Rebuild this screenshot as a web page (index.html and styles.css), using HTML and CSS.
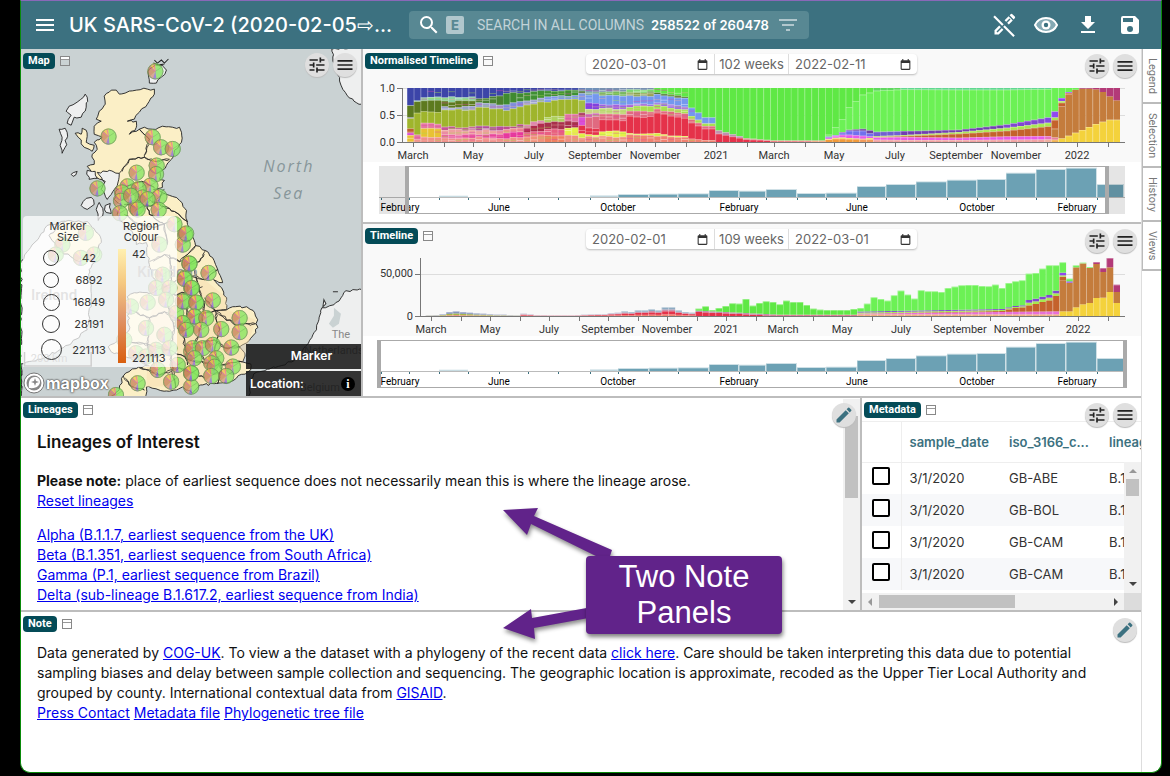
FILE: index.html
```html
<!DOCTYPE html>
<html lang="en">
<head>
<meta charset="utf-8">
<title>UK SARS-CoV-2</title>
<link rel="stylesheet" href="styles.css">
</head>
<body>
<svg class="defs" aria-hidden="true">
  <symbol id="i-tune" viewBox="0 0 24 24"><path d="M3 17v2h6v-2H3zM3 5v2h10V5H3zm10 16v-2h8v-2h-8v-2h-2v6h2zM7 9v2H3v2h4v2h2V9H7zm14 4v-2H11v2h10zm-6-4h2V7h4V5h-4V3h-2v6z"/></symbol>
  <symbol id="i-menu" viewBox="0 0 24 24"><path d="M3 18h18v-2H3v2zm0-5h18v-2H3v2zm0-7v2h18V6H3z"/></symbol>
  <symbol id="i-pencil" viewBox="0 0 24 24"><path d="M3 17.25V21h3.75L17.81 9.94l-3.75-3.75L3 17.25zM20.71 7.04a1 1 0 0 0 0-1.41l-2.34-2.34a1 1 0 0 0-1.41 0l-1.83 1.83 3.75 3.75 1.83-1.83z"/></symbol>
  <symbol id="i-cal" viewBox="0 0 24 24"><path d="M19 4h-1V2h-2v2H8V2H6v2H5a2 2 0 0 0-2 2v14a2 2 0 0 0 2 2h14a2 2 0 0 0 2-2V6a2 2 0 0 0-2-2zm0 16H5V9h14v11z"/></symbol>
  <symbol id="i-search" viewBox="0 0 24 24"><path d="M15.5 14h-.79l-.28-.27A6.47 6.47 0 0 0 16 9.5 6.5 6.5 0 1 0 9.5 16c1.61 0 3.09-.59 4.23-1.57l.27.28v.79l5 4.99L20.49 19l-4.99-5zm-6 0a4.5 4.5 0 1 1 0-9 4.5 4.5 0 0 1 0 9z"/></symbol>
</svg>
<div class="app">
  <header class="bar">
    <button class="plain" aria-label="Menu"><svg class="i24"><use href="#i-menu"/></svg></button>
    <h1>UK SARS-CoV-2 (2020-02-05⇨...</h1>
    <div class="search">
      <svg class="i24"><use href="#i-search"/></svg>
      <span class="key">E</span>
      <input type="text" aria-label="Search" placeholder="SEARCH IN ALL COLUMNS">
      <strong>258522 of 260478</strong>
      <svg class="filter" viewBox="0 0 18 12"><path d="M7 12h4v-2H7v2zM0 0v2h18V0H0zm3 7h12V5H3v2z"/></svg>
    </div>
    <nav class="tools">
      <button class="plain" aria-label="Stop editing"><svg class="i24" viewBox="0 0 24 24"><path d="M2.5 21.5v-4.2L7.2 12.6l4.2 4.2-4.700 4.700zM12.600 7.200l4-4 4.200 4.200-4 4zM17.600 2.200l1.300-1.200q.8-.5 1.500.2l2.400 2.400q.7.8.1 1.500l-1.200 1.300zM1.300 4l1.500-1.500 20 20-1.500 1.500z"/><path d="M5 19l13-13" stroke="#3c7180" stroke-width="1.500"/></svg></button>
      <button class="plain" aria-label="View"><svg class="i24" viewBox="0 0 24 24"><path d="M12 5C7 5 2.730 8.110 1 12c1.730 3.890 6 7 11 7s9.270-3.110 11-7c-1.730-3.890-6-7-11-7z" fill="#84a9b4" stroke="#fff" stroke-width="2"/><circle cx="12" cy="12" r="4.500"/><circle cx="12" cy="12" r="2.200" fill="#3c7180"/></svg></button>
      <button class="plain" aria-label="Download"><svg class="i24" viewBox="0 0 24 24"><path d="M19 9h-4V3H9v6H5l7 7 7-7zM5 18v2h14v-2H5z"/></svg></button>
      <button class="plain" aria-label="Save"><svg class="i24" viewBox="0 0 24 24"><path d="M17 3H5a2 2 0 0 0-2 2v14a2 2 0 0 0 2 2h14a2 2 0 0 0 2-2V7l-4-4zm-5 16a3 3 0 1 1 0-6 3 3 0 0 1 0 6zm3-10H5V5h10v4z"/></svg></button>
    </nav>
  </header>
  <div class="body">
    <main>
      <div class="row top">
        <section class="panel map">
          <svg id="map" viewBox="22 50 339 346" preserveAspectRatio="xMidYMid slice" role="img" aria-label="Map of UK"></svg>
          <div class="head over"><h2>Map</h2><i class="win"></i><span class="acts"><button class="round" aria-label="Settings"><svg><use href="#i-tune"/></svg></button><button class="round" aria-label="Map menu"><svg><use href="#i-menu"/></svg></button></span></div>
          <div class="legend">
            <div class="sizes">
              <h3>Marker Size</h3>
              <ul>
                <li><i class="c16"></i><span>42</span></li>
                <li><i class="c16"></i><span>6892</span></li>
                <li><i class="c17"></i><span>16849</span></li>
                <li><i class="c18"></i><span>28191</span></li>
                <li><i class="c21"></i><span>221113</span></li>
              </ul>
            </div>
            <div class="region">
              <h3>Region Colour</h3>
              <div class="scale"><i></i><div><span>42</span><span>221113</span></div></div>
            </div>
          </div>
          <div class="mapbox"><svg viewBox="0 0 22 22"><circle cx="11" cy="11" r="10" fill="#fff" stroke="#777" stroke-width="1"/><circle cx="11" cy="11" r="7.500" fill="#888"/><path d="M6 16c-1-7 1-11 6-11 3 0 5 2 5 5s-3 7-11 6z" fill="#fff"/><path d="M12 6l1 3 3 1-3 1-1 3-1-3-3-1 3-1z" fill="#888"/></svg><b>mapbox</b></div>
          <div class="tip"><p class="tt">Marker</p><p class="loc">Location:<span class="info">i</span></p></div>
        </section>
        <div class="stack">
          <section class="panel time">
            <div class="head"><h2>Normalised Timeline</h2><i class="win"></i>
              <div class="dates"><input type="text" aria-label="Start date" value="2020-03-01"><svg><use href="#i-cal"/></svg><span>102 weeks</span><input type="text" aria-label="End date" value="2022-02-11"><svg><use href="#i-cal"/></svg></div>
              <span class="acts"><button class="round" aria-label="Settings"><svg><use href="#i-tune"/></svg></button><button class="round" aria-label="Menu"><svg><use href="#i-menu"/></svg></button></span></div>
            <svg id="c1" viewBox="363 84 778 78" role="img" aria-label="Normalised timeline"></svg>
            <svg id="b1" class="brush" viewBox="363 162 778 60" role="img" aria-label="Range"></svg>
          </section>
          <section class="panel time">
            <div class="head"><h2>Timeline</h2><i class="win"></i>
              <div class="dates"><input type="text" aria-label="Start date" value="2020-02-01"><svg><use href="#i-cal"/></svg><span>109 weeks</span><input type="text" aria-label="End date" value="2022-03-01"><svg><use href="#i-cal"/></svg></div>
              <span class="acts"><button class="round" aria-label="Settings"><svg><use href="#i-tune"/></svg></button><button class="round" aria-label="Menu"><svg><use href="#i-menu"/></svg></button></span></div>
            <svg id="c2" viewBox="363 258 778 78" role="img" aria-label="Timeline"></svg>
            <svg id="b2" class="brush" viewBox="363 336 778 60" role="img" aria-label="Range"></svg>
          </section>
        </div>
      </div>
      <div class="row mid">
        <section class="panel lineages">
          <div class="head"><h2>Lineages</h2><i class="win"></i><span class="acts"><button class="round edit" aria-label="Edit"><svg><use href="#i-pencil"/></svg></button></span></div>
          <article class="note">
            <h3>Lineages of Interest</h3>
            <p><b>Please note:</b> place of earliest sequence does not necessarily mean this is where the lineage arose.<br><a href="#">Reset lineages</a></p>
            <p><a href="#">Alpha (B.1.1.7, earliest sequence from the UK)</a><br><a href="#">Beta (B.1.351, earliest sequence from South Africa)</a><br><a href="#">Gamma (P.1, earliest sequence from Brazil)</a><br><a href="#">Delta (sub-lineage B.1.617.2, earliest sequence from India)</a></p>
          </article>
          <div class="vs"><i></i><svg viewBox="0 0 8 4"><path d="M0 0h8L4 4z"/></svg></div>
        </section>
        <section class="panel meta">
          <div class="head"><h2>Metadata</h2><i class="win"></i><span class="acts"><button class="round" aria-label="Settings"><svg><use href="#i-tune"/></svg></button><button class="round" aria-label="Menu"><svg><use href="#i-menu"/></svg></button></span></div>
          <div class="grid">
            <table>
              <thead><tr><th class="ck"></th><th>sample_date</th><th>iso_3166_c...</th><th>lineage</th></tr></thead>
              <tbody>
                <tr><td class="ck"><input type="checkbox" aria-label="Select row 1"></td><td>3/1/2020</td><td>GB-ABE</td><td>B.1</td></tr>
                <tr><td class="ck"><input type="checkbox" aria-label="Select row 2"></td><td>3/1/2020</td><td>GB-BOL</td><td>B.1</td></tr>
                <tr><td class="ck"><input type="checkbox" aria-label="Select row 3"></td><td>3/1/2020</td><td>GB-CAM</td><td>B.1</td></tr>
                <tr><td class="ck"><input type="checkbox" aria-label="Select row 4"></td><td>3/1/2020</td><td>GB-CAM</td><td>B.1</td></tr>
              </tbody>
            </table>
            <div class="tv"><svg class="dim" viewBox="0 0 8 4"><path d="M0 4h8L4 0z"/></svg><i></i><svg viewBox="0 0 8 4"><path d="M0 0h8L4 4z"/></svg></div>
          </div>
          <div class="th"><svg class="dim" viewBox="0 0 4 8"><path d="M4 0v8L0 4z"/></svg><i></i><svg viewBox="0 0 4 8"><path d="M0 0v8l4-4z"/></svg><b></b></div>
        </section>
      </div>
      <section class="panel foot">
        <div class="head"><h2>Note</h2><i class="win"></i><span class="acts"><button class="round edit" aria-label="Edit"><svg><use href="#i-pencil"/></svg></button></span></div>
        <article class="note"><p>Data generated by <a href="#">COG-UK</a>. To view a the dataset with a phylogeny of the recent data <a href="#">click here</a>. Care should be taken interpreting this data due to potential<br>sampling biases and delay between sample collection and sequencing. The geographic location is approximate, recoded as the Upper Tier Local Authority and<br>grouped by county. International contextual data from <a href="#">GISAID</a>.<br><a href="#">Press Contact</a> <a href="#">Metadata file</a> <a href="#">Phylogenetic tree file</a></p></article>
      </section>
    </main>
    <nav class="tabs"><button>Legend</button><button>Selection</button><button>History</button><button>Views</button></nav>
  </div>
</div>
<aside class="callout">
  <svg viewBox="0 0 290 140" aria-hidden="true"><path d="M3 8L38 6 34 14 112 48 108 60 31 22 27 33z"/><path d="M3 126L31 107 32 116 92 105 94 115 34 126 35 137z"/></svg>
  <p>Two Note Panels</p>
</aside>
<script src="app.js"></script>
</body>
</html>
```

FILE: styles.css
```css
* { box-sizing: border-box; }
body { margin: 0; background: #000; font-family: Inter, "Liberation Sans", sans-serif; color: #111; position: relative; }
h1, h2, h3, p, ul { margin: 0; padding: 0; }
button, input { font: inherit; margin: 0; }
svg { display: block; }
.defs { position: absolute; width: 0; height: 0; }
.app { margin: 0 8px 0 20px; height: calc(100vh - 3px); min-height: 773px; display: flex; flex-direction: column; background: #fff; border: 1px solid #0a8a0a; border-top-color: #8a68b8; border-radius: 0 0 10px 10px; overflow: hidden; }
.bar { height: 48px; background: #3c7180; display: flex; align-items: center; padding: 0 19px 0 12px; }
.plain { border: 0; background: none; padding: 0; }
.i24 { width: 24px; height: 24px; fill: #fff; }
h1 { color: #fff; font-size: 20px; font-weight: 500; width: 340px; margin-left: 12px; white-space: nowrap; }
.search { width: 400px; height: 28px; background: #588893; border-radius: 4px; display: flex; align-items: center; padding: 0 12px 0 8px; }
.key { width: 18px; height: 18px; margin: 0 13px 0 5px; border-radius: 2px; background: #b1c7cd; color: #588893; font-size: 13px; font-weight: 800; line-height: 18px; text-align: center; }
.search input { width: 174px; flex: none; border: 0; padding: 0; background: none; color: #fff; font-family: Roboto, sans-serif; font-size: 14px; }
.search input::placeholder { color: #c2d3d8; opacity: 1; }
.search strong { color: #fff; font-size: 13px; font-weight: 600; white-space: nowrap; }
.filter { width: 18px; height: 12px; fill: #b1c7cd; margin-left: auto; }
.tools { margin-left: auto; display: flex; gap: 18px; }
.body { flex: 1; display: flex; min-height: 0; }
main { flex: 1; min-width: 0; display: flex; flex-direction: column; border-right: 1px solid #ddd; }
.row { display: flex; border-bottom: 2px solid #bdbdbd; }
.panel { position: relative; }
.head { display: flex; align-items: center; height: 24px; padding: 0 4px 0 2px; }
.head h2 { background: #044b57; color: #fff; border-radius: 4px; font-family: Roboto, sans-serif; font-size: 11px; font-weight: 700; line-height: 16px; padding: 0 5px; white-space: nowrap; }
.win { width: 10px; height: 10px; border: 1px solid #888; box-shadow: inset 0 2px #fff, inset 0 3px #999; margin-left: 5px; }
.acts { margin-left: auto; display: flex; gap: 4px; padding-top: 8px; }
.round { width: 24px; height: 24px; border-radius: 50%; border: 0; padding: 2px; background: #dfdfdf; box-shadow: 0 1px 1px #bbb; position: relative; z-index: 2; }
.round svg { width: 20px; height: 20px; fill: #222; }
.edit svg { fill: #3c7180; }
.map { flex: 0 0 342px; height: 347px; border-right: 2px solid #bdbdbd; overflow: hidden; }
#map { width: 100%; height: 100%; }
.over { position: absolute; top: 0; left: 0; right: 0; }
.legend { position: absolute; left: 2px; top: 167px; width: 154px; height: 151px; border-radius: 4px 4px 0 0; background: rgba(255,255,255,.72); display: flex; color: #333; font-size: 11px; }
.legend h3 { font-size: 11px; font-weight: 400; line-height: 11px; text-align: center; }
.sizes { width: 90px; padding: 5px 4px 0 10px; }
.region h3 { width: 50px; }
.sizes h3 { width: 50px; margin-left: 10px; }
.sizes li { display: flex; align-items: center; height: 22px; }
.sizes li:last-child { height: 29px; }
.sizes ul { padding-top: 4px; }
.sizes li i { border: 1px solid #333; border-radius: 50%; margin: 0 auto; }
.c16 { width: 16px; height: 16px; }
.c17 { width: 17px; height: 17px; }
.c18 { width: 18px; height: 18px; }
.c21 { width: 21px; height: 21px; }
.sizes li span { width: 40px; text-align: center; }
.region { width: 60px; padding-top: 5px; }
.region h3 { margin-left: 3px; }
.scale { display: flex; margin-top: 6px; height: 114px; gap: 6px; padding-left: 5px; }
.scale i { width: 8px; background: linear-gradient(#fff0b0, #f5c880 30%, #e0956a 60%, #d95f0e); }
.scale div { display: flex; flex-direction: column; justify-content: space-between; line-height: 10px; }
.mapbox { position: absolute; left: 2px; bottom: 2px; display: flex; align-items: center; gap: 1px; color: #fff; font-size: 16px; line-height: 20px; text-shadow: 0 0 2px #555, 0 0 2px #555, 0 0 1px #555; }
.mapbox svg { width: 22px; height: 22px; }
.tip { position: absolute; right: 0; bottom: 0; width: 115px; color: #fff; font-size: 12px; font-weight: 600; }
.tip p { height: 25px; line-height: 24px; background: rgba(20,20,20,.86); padding: 0 6px 0 4px; }
.tip .tt { margin-bottom: 2px; text-align: center; padding-left: 22px; }
.loc { display: flex; justify-content: space-between; align-items: center; }
.info { width: 14px; height: 14px; border-radius: 50%; background: #000; font: 700 12px/14px "Liberation Serif", serif; text-align: center; }
.stack { flex: 1; min-width: 0; display: flex; flex-direction: column; }
.time { background: #f9f9f9; }
.time:first-child { border-bottom: 2px solid #bdbdbd; }
.time .head { height: 35px; align-items: flex-start; padding-top: 4px; }
.time + .time .head { height: 34px; }
.time .win { margin-top: 3px; }
.time .acts { margin-left: auto; padding-top: 1px; }
.time > svg { width: 100%; overflow: visible; }
.brush { background: #fff; }
.dates { position: absolute; left: 223px; top: 5px; display: flex; align-items: center; height: 20px; background: #fff; border-radius: 4px; box-shadow: 0 1px 2px #bbb; color: #666; font-size: 13px; }
.dates input { width: 100px; border: 0; padding: 0 0 0 6px; background: none; color: #666; font-size: 13px; }
.dates svg { width: 13px; height: 13px; fill: #333; margin: 0 5px 0 10px; }
.dates span { border: solid #ddd; border-width: 0 1px; width: 75px; line-height: 20px; text-align: center; white-space: nowrap; }
.mid { height: 214px; }
.lineages { flex: 1; min-width: 0; overflow: hidden; }
.note { padding: 0 16px; font-size: 14px; line-height: 20px; }
.note h3 { font-size: 17px; line-height: 20px; padding: 10px 0 19px; font-weight: 600; }
.note p { margin-bottom: 14px; }
a { color: #0000ee; }
.lineages .acts { position: absolute; right: 4px; top: 5px; padding: 0; }
.vs { position: absolute; right: 0; top: 1px; bottom: 0; width: 17px; background: #f1f1f1; padding: 17px 2px 6px; display: flex; flex-direction: column; align-items: center; justify-content: space-between; }
.vs i { width: 13px; height: 82px; background: #c1c1c1; }
.vs svg, .tv svg { width: 8px; height: 4px; fill: #444; }
.dim { opacity: .5; }
.meta { flex: 0 0 281px; min-width: 0; border-left: 2px solid #bdbdbd; display: flex; flex-direction: column; }
.meta .head { border-bottom: 1px solid #eee; flex: none; height: 24px; }
.meta .acts { padding-top: 10px; }
.grid { position: relative; overflow: hidden; flex: 1; }
table { border-collapse: collapse; table-layout: fixed; width: 339px; font-size: 13px; color: #333; }
th { height: 40px; width: 100px; padding: 0 8px; text-align: left; color: #3c7180; font-size: 13px; font-weight: 600; border-bottom: 1px solid #eee; }
td { height: 32px; padding: 0 8px; }
tbody tr:nth-child(even) { background: #f7f8fa; }
.ck { width: 39px; padding: 0 0 0 10px; border-right: 1px solid #eee; }
.ck input { appearance: none; display: block; width: 18px; height: 18px; border: 2px solid #000; border-radius: 2px; background: #fff; margin-bottom: 4px; }
.tv { position: absolute; right: 0; top: 40px; bottom: 0; width: 17px; background: #f1f1f1; display: flex; flex-direction: column; align-items: center; padding: 7px 0 7px; }
.tv i { width: 13px; height: 17px; background: #c1c1c1; margin: 6px 0 auto; }
.th { height: 17px; background: #f1f1f1; display: flex; align-items: center; padding-left: 6px; }
.th svg { width: 4px; height: 8px; fill: #444; }
.th i { width: 136px; height: 13px; background: #c1c1c1; margin: 0 auto 0 7px; }
.th b { width: 17px; height: 17px; background: #dcdcdc; margin-left: 6px; }
.foot { flex: 1; }
.foot .note { padding-top: 7px; }
.foot .acts { padding-top: 12px; }
.tabs { width: 19px; display: flex; flex-direction: column; align-items: stretch; }
.tabs button { writing-mode: vertical-rl; border: 2px solid #bbb; border-width: 0 0 2px 1px; background: #fff; color: #777; font-family: Roboto, sans-serif; font-size: 11px; padding: 9px 2px 8px; text-align: left; line-height: 14px; }
.callout { position: absolute; left: 500px; top: 502px; width: 290px; height: 140px; }
.callout svg { width: 290px; height: 140px; fill: #61238a; filter: drop-shadow(1px 3px 2px rgba(0,0,0,.45)); }
.callout p { position: absolute; left: 86px; top: 54px; width: 196px; height: 78px; background: #61238a; border-radius: 4px; box-shadow: 1px 3px 4px rgba(0,0,0,.5); color: #fff; font: 31px/36px "Liberation Sans", sans-serif; text-align: center; padding: 3px 28px; }
.ax { font-family: Roboto, sans-serif; font-size: 11px; fill: #333; text-anchor: middle; }
.ax.end { text-anchor: end; }
.bx { font-family: Roboto, sans-serif; font-size: 10px; fill: #000; text-anchor: middle; }
.sea { font-family: "Open Sans", sans-serif; font-style: italic; font-size: 16px; fill: #87969a; letter-spacing: 2px; text-anchor: middle; }
.place { font-family: Roboto, sans-serif; fill: #888; font-size: 11px; text-anchor: middle; }
.big { font-size: 15px; font-weight: 500; fill: #999; }
```

FILE: app.js
```js
const R = (x, y, w, h, f, o) => `<rect x="${x.toFixed(2)}" y="${y.toFixed(2)}" width="${w.toFixed(2)}" height="${Math.max(0, h).toFixed(2)}" fill="${f}"${o ? ` opacity="${o}"` : ''}/>`;
const L = (x1, y1, x2, y2, c, w = 1) => `<path d="M${x1} ${y1}L${x2} ${y2}" stroke="${c}" stroke-width="${w}"/>`;
const T = (x, y, s, c) => `<text x="${x}" y="${y}" class="${c}">${s}</text>`;
let seed = 7;
const rnd = () => (seed = (seed * 16807) % 2147483647) / 2147483647;

/* Share of each lineage by week: week -> [colour, cumulative top out of 162] */
const frames = [
  [0, ['#f0908a', 3], ['#e8c234', 18], ['#dd55e0', 27], ['#bb5a22', 39], ['#9fb52c', 70], ['#8888bb', 73], ['#5d7a1f', 108], ['#63d0b0', 111], ['#3c45a8', 162]],
  [1, ['#f0908a', 8], ['#e578a0', 24], ['#9fb52c', 85], ['#5d7a1f', 120], ['#8fd3a0', 126], ['#3c45a8', 162]],
  [2, ['#f0908a', 15], ['#e8c234', 40], ['#e578a0', 55], ['#9fb52c', 90], ['#5d7a1f', 125], ['#8fd3a0', 135], ['#3c45a8', 162]],
  [5, ['#f0908a', 12], ['#e8589b', 22], ['#eea0a0', 36], ['#c05a90', 45], ['#9fb52c', 97], ['#9aa0cc', 105], ['#5d7a1f', 122], ['#8fd3a0', 135], ['#3c45a8', 162]],
  [10, ['#f0908a', 14], ['#e8469b', 22], ['#eea0a0', 36], ['#b0509a', 48], ['#9fb52c', 105], ['#9aa0cc', 117], ['#4a8030', 130], ['#3c45a8', 162]],
  [14, ['#f0908a', 12], ['#e8389b', 26], ['#ee9090', 36], ['#b8508a', 46], ['#9fb52c', 95], ['#7f8cdc', 112], ['#3f8a30', 145], ['#3c45a8', 162]],
  [17, ['#f0907a', 16], ['#e86080', 30], ['#b02a4c', 44], ['#dd80b0', 54], ['#9fb52c', 113], ['#9aa0cc', 125], ['#3f9032', 150], ['#3c45a8', 162]],
  [20, ['#ee8060', 22], ['#e86080', 36], ['#a8304c', 60], ['#b0d060', 72], ['#9fb52c', 122], ['#7f98e8', 136], ['#3f9032', 155], ['#3c45a8', 162]],
  [23, ['#ee9080', 18], ['#e4f048', 42], ['#a8304c', 62], ['#e070a0', 82], ['#9fb52c', 128], ['#7f98e8', 138], ['#3f9032', 154], ['#4450a8', 162]],
  [25, ['#ee9080', 14], ['#e4f048', 24], ['#e5324a', 48], ['#d850d8', 75], ['#b04068', 88], ['#a4bd44', 126], ['#7f98e8', 146], ['#3f9032', 152], ['#6680b8', 162]],
  [26, ['#ee9080', 15], ['#e4f048', 22], ['#e5324a', 42], ['#e06a80', 76], ['#cc70b0', 86], ['#c4d880', 98], ['#8040e0', 118], ['#7498ee', 143], ['#70a090', 150], ['#7090b8', 162]],
  [28, ['#f09080', 16], ['#e4f048', 32], ['#e5324a', 66], ['#e06a80', 84], ['#c4d880', 100], ['#a060e0', 112], ['#7498ee', 140], ['#78b860', 150], ['#7890b0', 162]],
  [32, ['#f08070', 20], ['#e4f048', 26], ['#e5324a', 76], ['#e06a80', 92], ['#a8e050', 106], ['#a070e0', 114], ['#7498ee', 138], ['#88a048', 146], ['#7bd870', 158], ['#7890b0', 162]],
  [36, ['#f08070', 18], ['#e4f048', 24], ['#e5324a', 85], ['#e06a80', 98], ['#a8e050', 110], ['#a070e0', 118], ['#7498ee', 142], ['#4e7a30', 148], ['#5fe845', 162]],
  [40, ['#f08070', 15], ['#e4f048', 18], ['#e5324a', 72], ['#e06a80', 86], ['#a8e050', 98], ['#a070e0', 106], ['#7498ee', 132], ['#4e7a30', 136], ['#5fe845', 162]],
  [41, ['#f08070', 10], ['#e5324a', 58], ['#e06a80', 68], ['#a8e050', 78], ['#7498ee', 103], ['#5fe845', 162]],
  [43, ['#f08070', 6], ['#e5324a', 40], ['#e06a80', 48], ['#a8e050', 56], ['#7498ee', 74], ['#5fe845', 162]],
  [45, ['#e5324a', 25], ['#c090b0', 35], ['#5fe845', 162]],
  [49, ['#e5324a', 8], ['#c0a080', 12], ['#5fe845', 162]],
  [53, ['#f06a70', 4], ['#c0a080', 5], ['#5fe845', 162]],
  [59, ['#f09060', 3], ['#c0a080', 5], ['#5fe845', 162]],
  [61, ['#f09a3a', 8], ['#e8e050', 9], ['#e85ae8', 13], ['#7070ee', 16], ['#7040a0', 17], ['#6cf155', 22], ['#5fe845', 162]],
  [62, ['#f09a3a', 10], ['#e8e050', 13], ['#e85ae8', 18], ['#7070ee', 20], ['#7040a0', 21], ['#6cf155', 44], ['#5fe845', 162]],
  [63, ['#f09a3a', 10], ['#e8e050', 14], ['#e85ae8', 22], ['#7070ee', 28], ['#7040a0', 30], ['#6cf155', 68], ['#5fe845', 162]],
  [64, ['#f09a3a', 9], ['#e8e050', 12], ['#e85ae8', 22], ['#7070ee', 34], ['#7040a0', 37], ['#6cf155', 104], ['#5fe845', 162]],
  [66, ['#f09a5a', 9], ['#e8e050', 10], ['#e85ae8', 19], ['#7070ee', 34], ['#7040a0', 40], ['#6cf155', 142], ['#5fe845', 162]],
  [68, ['#f0a0a0', 7], ['#e85ae8', 14], ['#c4622c', 15], ['#b0d060', 18], ['#7060d0', 31], ['#6cf155', 154], ['#60d860', 162]],
  [72, ['#f0a0a0', 6], ['#e85ae8', 15], ['#c4622c', 18], ['#b0e050', 21], ['#7040b0', 33], ['#6cf155', 158], ['#60d890', 162]],
  [80, ['#f0a0a0', 6], ['#e85ae8', 13], ['#c4622c', 25], ['#a8e850', 30], ['#7040b0', 37], ['#6cf155', 157], ['#60d890', 162]],
  [87, ['#f0a0a0', 7], ['#e85ae8', 17], ['#c4622c', 34], ['#a8e850', 43], ['#8048d0', 53], ['#6cf155', 157], ['#60d890', 162]],
  [93, ['#f0b0a0', 8], ['#e870c0', 18], ['#c4622c', 47], ['#a8e850', 58], ['#8048e0', 74], ['#6cf155', 159], ['#60d890', 162]],
  [94, ['#f0b050', 7], ['#e8809a', 14], ['#c47c3c', 40], ['#c4622c', 66], ['#a8e850', 74], ['#9048f0', 92], ['#6cf155', 162]],
  [95, ['#f4d23c', 11], ['#c47c3c', 107], ['#c4622c', 118], ['#a8e850', 123], ['#9048f0', 132], ['#6cf155', 162]],
  [96, ['#f4d23c', 19], ['#c47c3c', 143], ['#c4622c', 147], ['#9048f0', 150], ['#6cf155', 162]],
  [97, ['#f4d23c', 28], ['#c47c3c', 157], ['#6cf155', 162]],
  [98, ['#f4d23c', 36], ['#c47c3c', 160], ['#b33a78', 162]],
  [99, ['#f4d23c', 45], ['#c47c3c', 160], ['#b33a78', 162]],
  [100, ['#f4d23c', 54], ['#c47c3c', 158], ['#b33a78', 162]],
  [101, ['#f4d23c', 61], ['#c47c3c', 150], ['#b33a78', 162]],
  [102, ['#f4d23c', 67], ['#c47c3c', 137], ['#b33a78', 162]],
  [103, ['#f4d23c', 67], ['#c47c3c', 125], ['#b33a78', 162]]
];
const frameAt = i => {
  let k = 0;
  while (k + 1 < frames.length && frames[k + 1][0] <= i) k++;
  const a = frames[k], b = frames[k + 1];
  const la = a.slice(1);
  if (!b || b.length !== a.length) return la;
  const t = (i - a[0]) / (b[0] - a[0]);
  return la.map(([c, v], n) => [c, v + (b[n + 1][1] - v) * t]);
};

let s = L(402, 115.5, 1125, 115.5, '#ddd') + L(402, 88.5, 1125, 88.5, '#ddd');
for (let i = 0; i < 104; i++) {
  const x = 407 + i * 713 / 104, w = 713 / 104;
  let prev = 0;
  const fr = frameAt(i);
  fr.forEach(([c, v], n) => {
    let top = v;
    if (n < fr.length - 1 && i < 40) top = Math.min(158, v + rnd() * 5 - 2);
    const y = 142 - top / 3, h = (top - prev) / 3;
    s += R(x, y, w, h, c);
    if (n < fr.length - 1 && !(i > 96 && n === 1)) s += R(x, y, w, 0.7, '#fff', 0.4);
    if (i < 42 && h > 2 && h < 9) s += R(x, y + h * (0.3 + rnd() * 0.4), w, 0.8, ['#fff', '#e040b0', '#f0b0a0', '#a8e050'][Math.floor(rnd() * 4)], 0.5);
    prev = top;
  });
  s += R(x, 88, 0.7, 54, '#fff', 0.3);
}
s += L(402.5, 88, 402.5, 142, '#777') + L(397, 142.5, 1125, 142.5, '#777');
[['1.0', 88], ['0.5', 115], ['0.0', 142]].forEach(([t, y]) => { s += L(397, y + .5, 403, y + .5, '#777') + T(395, y + 4, t, 'ax end'); });
const names = ['March', 'May', 'July', 'September', 'November', '2021', 'March', 'May', 'July', 'September', 'November', '2022'];
[413, 473, 534, 595, 655, 716, 774, 834, 895, 956, 1016, 1077].forEach((x, i) => { s += L(x + .5, 142, x + .5, 147, '#777') + L(x + 31.5, 142, x + 31.5, 147, '#777') + T(x, 159, names[i], 'ax'); });
document.getElementById('c1').innerHTML = s;

/* Weekly counts: bar heights in thirds of a pixel */
const counts = [2, 3, 5, 12, 14, 12, 10, 8, 7, 5, 4, 4, 3, 2, 7, 5, 3, 3, 2, 2, 2, 2, 3, 4, 5, 6, 6, 9, 10, 14, 12, 17, 17, 20, 17, 26, 26, 17, 12, 10, 22, 29, 18, 24, 30, 38, 37, 51, 31, 39, 44, 42, 35, 46, 42, 42, 33, 22, 19, 18, 18, 18, 18, 21, 24, 37, 56, 51, 46, 62, 76, 64, 52, 77, 74, 74, 72, 84, 88, 92, 93, 93, 90, 89, 94, 84, 99, 104, 107, 127, 129, 142, 152, 152, 161, 112, 152, 160, 147, 162, 144, 174, 94];
s = L(421, 274.500, 1125, 274.500, '#ddd');
const N = counts.length, pw = 6.74;
counts.forEach((h, i) => {
  const k = N - 1 - i, x = 1120 - (k + 1) * pw;
  const stack = (a) => { let p = 0; a.forEach(([c, v]) => { s += R(x, 316 - v / 3, pw, (v - p) / 3, c); p = v; }); };
  if (k <= 6) {
    const y = [39, 72, 55, 54, 39, 35, 26][k], l = [72, 146, 132, 156, 144, 158, 146][k];
    stack([['#f4d23c', y], ['#c47c3c', l], [k < 4 ? '#b33a78' : '#6cf155', h]]);
  } else if (k === 7) stack([['#f4d23c', 14], ['#c47c3c', 100], ['#9048f0', 104], ['#6cf155', h]]);
  else if (k === 8) stack([['#f4d23c', 14], ['#c47c3c', 107], ['#c4622c', 118], ['#a8e850', 122], ['#9048f0', 130], ['#6cf155', h]]);
  else if (k <= 38) {
    const q = (39 - k) / 30, b = k <= 16 ? [0, 0, 0, 0, 0, 0, 0, 0, 0, 60, 47, 42, 36, 32, 26, 24, 20][k] : 7 + q * 11;
    stack([['#f0b080', 5], ['#e870d8', 7 + q * 7], ['#c4622c', b], ['#a8e850', b + (k < 14 ? 8 : 3)], ['#8048d0', b + (k < 14 ? 16 : 6)], ['#6cf155', h]]);
  } else if (i < 14) stack([['#ee9080', h * .2], ['#a8b848', h * .55], ['#8090b8', h]]);
  else if (i < 40) stack([['#f08070', h * .2], ['#e5324a', h * .55], ['#cc90a8', h * .75], [i > 28 ? '#88a8c0' : '#aaa8c8', h]]);
  else stack([['#e5324a', Math.max(2, 12 - (i - 40))], ['#c090b0', Math.max(4, 16 - (i - 40))], ['#5fe845', h]]);
  s += R(x, 316 - h / 3, pw, .8, '#fff', .4) + R(x, 316 - h / 3, .7, h / 3, '#fff', .35);
});
s += L(420.5, 258, 420.5, 316, '#777') + L(415, 316.5, 1125, 316.5, '#777') + L(415, 274.500, 421, 274.500, '#777') + T(413, 277, '50,000', 'ax end') + T(413, 320, '0', 'ax end');
[431, 490, 549, 608, 667, 726, 783, 842, 901, 960, 1019, 1078].forEach((x, i) => { s += L(x + .5, 316, x + .5, 321, '#777') + L(x + 30.5, 316, x + 30.5, 321, '#777') + T(x, 333, names[i], 'ax'); });
document.getElementById('c2').innerHTML = s;

const mx = [381, 409, 439, 468, 499, 528, 558, 590, 618, 649, 678, 709, 739, 766, 797, 826, 857, 886, 916, 947, 977, 1006, 1036, 1066, 1097, 1124];
const mh = [0, 0, 4, 0, 0, 0, 0, 5, 9, 10, 11, 21, 19, 24, 12, 13, 33, 39, 47, 52, 54, 73, 84, 88, 39];
const brush = (dy, full) => {
  let b = '';
  mh.forEach((h, i) => {
    if (h) b += R(mx[i], 197 + dy - h / 3, mx[i + 1] - mx[i], h / 3, '#cfe0e6') + R(mx[i] + .5, 198 + dy - h / 3, mx[i + 1] - mx[i] - 1.500, h / 3 - 1, h < 6 ? '#b8d0d8' : '#6ca1b4');
    b += L(mx[i] + .5, 197 + dy, mx[i] + .5, 200 + dy, '#3c7180');
  });
  b += L(379, 197.5 + dy, 1125, 197.5 + dy, '#bbb');
  [['February', 400], ['June', 499], ['October', 618], ['February', 739], ['June', 857], ['October', 977], ['February', 1077]].forEach(([t, x]) => { b += T(x, 211 + dy, t, 'bx'); });
  if (!full) b += R(379, 166, 28, 48, '#000', .1) + R(1107, 166, 18, 48, '#000', .1);
  const a = full ? 379 : 407, z = full ? 1125 : 1107;
  return b + `<rect x="${a}" y="${166.5 + dy}" width="${z - a}" height="47" fill="none" stroke="#aaa"/>` + R(a - 2, 166 + dy, 4, 48, '#aaa') + R(z - 2, 166 + dy, 4, 48, '#aaa');
};
document.getElementById('b1').innerHTML = brush(0, false);
document.getElementById('b2').innerHTML = brush(174, true);

/* Map */
const jag = pts => {
  let d = '';
  pts.forEach((p, i) => {
    const q = pts[(i + 1) % pts.length];
    d += (i ? 'L' : 'M') + p[0] + ' ' + p[1];
    const n = Math.floor(Math.hypot(q[0] - p[0], q[1] - p[1]) / 3);
    for (let k = 1; k < n; k++) d += `L${(p[0] + (q[0] - p[0]) * k / n + rnd() * 2.4 - 1.2).toFixed(1)} ${(p[1] + (q[1] - p[1]) * k / n + rnd() * 2.4 - 1.2).toFixed(1)}`;
  });
  return d + 'Z';
};
const P = str => str.trim().split(/\s+/).map(v => v.split(',').map(Number));
const land = (str, f) => `<path d="${jag(P(str))}" fill="${f}" stroke="#222" stroke-width=".9"/>`;
const gb = '112,91 117,91 120,95 130,92 137,91 148,90 155,90 155,95 148,105 140,113 135,120 128,122 137,122 137,128 130,135 140,130 145,128 153,130 163,127 173,128 180,128 182,133 182,143 175,151 172,160 167,166 163,171 160,180 165,181 163,188 154,190 167,195 173,197 180,201 187,211 188,225 193,237 196,246 206,251 213,258 216,265 219,273 223,283 214,280 222,288 227,298 227,310 233,307 247,307 255,313 258,320 256,333 247,343 240,347 245,353 243,362 251,364 251,370 237,378 227,383 200,385 193,393 183,387 177,390 167,391 147,387 145,398 110,398 120,390 124,376 133,369 150,366 140,360 112,352 109,347 120,340 130,330 128,297 135,293 150,294 158,290 150,265 147,243 137,245 133,232 125,225 118,215 122,205 115,200 118,190 110,185 97,178 88,167 95,165 93,155 98,150 95,143 103,138 95,135 95,127 102,122 97,120 100,112 106,105 105,97 110,93';
const grey = '#eeefef', cream = '#fbefc6';
s = '<rect x="22" y="50" width="339" height="346" fill="#cad2d3"/>';
s += land('22,396 22,262 30,250 40,238 48,226 62,222 80,226 98,240 100,256 90,270 92,300 88,330 70,345 45,358 22,364', '#f2f3f3');
s += land('50,236 66,222 88,222 102,240 96,258 80,262 62,252', cream);
s += land(gb, cream);
s += '<path d="M160 290L205 280 227 298V310L256 320 243 362 200 385 147 387 150 318z" fill="#f6dcae" opacity=".45"/>';
s += land('98,173 110,171 120,174 118,186 112,195 108,200 102,190 106,182', grey);
s += land('86,95 88,98 87,108 82,118 75,118 72,126 68,124 72,116 67,112 70,107 78,103', grey);
s += land('60,130 66,129 68,133 66,148 63,154 61,146 63,138', grey);
s += land('83,129 87,131 87,143 95,146 93,152 85,148 79,138 76,134 82,135', cream);
s += land('84,202 92,198 95,205 88,210 82,206', grey) + land('97,210 100,203 104,213 99,221', grey) + land('106,206 111,204 112,214 107,213', grey) + land('72,175 78,172 74,177', grey) + land('88,171 96,172 98,179 90,180', grey);
s += land('150,70 156,66 163,66 167,71 162,78 157,84 150,84 149,76', grey) + '<path d="M155 61l3 3 4-3 3 3 4-4M154 64l5 2 6-1" fill="none" stroke="#222"/>';
s += land('332,50 333,62 338,76 341,86 347,96 354,102 363,105 363,48', grey);
s += land('363,290 346,291 334,305 322,308 319,320 313,335 306,346 292,362 270,369 254,374 248,398 363,398', grey);
s += '<path d="M334 308l7 6-2 10-6 4-4-4 5-8z" fill="#cad2d3"/><path d="M324 300l2 4-3 3zM333 292h5" fill="#fff" stroke="#333"/>';
const edges = ['120,174 130,160 145,158 155,162 170,160', '145,158 150,140 140,130', '118,190 130,186 142,182 155,188', '150,200 160,205 175,212 188,222', '125,215 140,225 155,228 170,222', '150,262 165,255 180,262 196,246', '160,290 175,282 190,275 205,280 218,270', '130,310 150,318 165,312 182,322 200,314 227,310', '195,270 200,290 205,305 202,325 195,345 205,360', '170,255 172,280 168,305 175,330 170,350 176,388', '205,298 215,310 235,325 256,324', '190,345 215,340 225,348 240,347', '130,342 150,345 170,350 190,360 215,365 243,362', '140,368 160,375 180,368 205,378', '215,310 220,330 215,350 222,370 218,384', '150,318 148,345 155,366', '165,190 155,205 140,208 125,205', '135,185 140,200 135,215', '185,262 190,300 183,330 188,365', '145,200 150,215 165,225 168,245', '206,251 200,262 186,266', '124,376 130,385 145,390', '203,287 190,292 170,296'];
edges.forEach(e => {
  const pts = P(e);
  s += `<path d="${jag(pts.concat(pts.slice(1, -1).reverse())).replace(/Z$/, '')}" fill="none" stroke="#222" stroke-width=".8"/>`;
});
s += T(168, 277, 'Kingdom', 'place big') + T(55, 300, 'Ireland', 'place big') + T(341, 338, 'The', 'place') + T(334, 354, 'Netherlands', 'place') + T(320, 391, 'Belgium', 'place');
s += T(289, 173, 'North', 'sea') + T(289, 200, 'Sea', 'sea');
const groups = [
  [20, 48, '408,73 268,268 400,270 425,300 460,305 412,355 352,376 410,380 235,423 325,417 393,415 358,425 308,435 420,448 305,460 370,450 350,480 418,487 302,497 385,455 335,445 465,530'],
  [20, 210, '355,0 497,75 490,105 510,162 495,205 515,235 497,275 530,280 525,320 490,340 500,355 200,70 130,105 110,135 185,145 225,135 420,105 430,195 410,235 450,235 440,270 335,290 385,278 380,355 435,375 470,310 315,390 350,430 380,440 410,420 450,415 475,465 515,425 515,490 355,520 415,480 455,515 515,530 290,555'],
  [180, 220, '20,42 30,132 15,178 37,205 87,160 10,245 50,248 100,242 45,290 80,295 180,295 10,310 20,330 65,330 125,328 180,337 40,385 70,385 100,375 155,383 45,415 110,415 95,430 105,440 160,440 35,460 95,468 140,468']
];
groups.forEach(([ox, oy, pts]) => P(pts).forEach(([x, y]) => {
  s += `<g transform="translate(${(ox + x / 3).toFixed(1)} ${(oy + y / 3).toFixed(1)})" opacity=".78"><circle r="8" fill="#86e660"/><path d="M0 0V-8A8 8 0 0 0-5.500 -5.800z" fill="#f0bc48"/><path d="M0 0L-5.500-5.800A8 8 0 0 0-5.800 5.500z" fill="#c8845a"/><path d="M0 0L-5.800 5.500A8 8 0 0 0-2.500 7.600z" fill="#d89080"/><path d="M0 0L-2.500 7.600A8 8 0 0 0 1 7.900z" fill="#9068d0"/><path d="M0 0L-6-4.500M0 0L-1.500-7.300" stroke="#e050b0" stroke-width=".7"/><path d="M0 0L6-4" stroke="#5cb848" stroke-width=".6"/><circle r="7.600" fill="none" stroke="#5f8a50" stroke-width=".9"/></g>`;
}));
s += '<path d="M25.500 352v14H92v-14" fill="none" stroke="#555" stroke-width="1.500"/>' + T(50, 362, '200 km', 'place');
document.getElementById('map').innerHTML = s;
```
